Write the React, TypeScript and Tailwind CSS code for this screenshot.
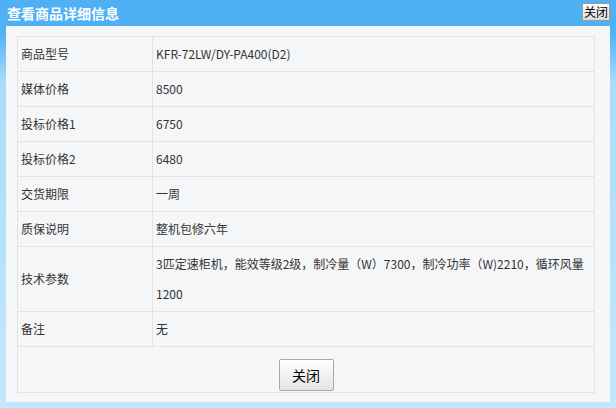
import React from 'react';

const rows: { label: string; value: string }[] = [
  { label: '商品型号', value: 'KFR-72LW/DY-PA400(D2)' },
  { label: '媒体价格', value: '8500' },
  { label: '投标价格1', value: '6750' },
  { label: '投标价格2', value: '6480' },
  { label: '交货期限', value: '一周' },
  { label: '质保说明', value: '整机包修六年' },
  { label: '技术参数', value: '3匹定速柜机，能效等级2级，制冷量（W）7300，制冷功率（W)2210，循环风量1200' },
  { label: '备注', value: '无' },
];

export default function App() {
  return (
    <div
      className="w-[616px] h-[408px] flex flex-col bg-[linear-gradient(180deg,#4fb1f4_0%,#4fb1f4_8%,#a9dcfa_20%,#c3e8fc_100%)] text-[#333]"
      style={{ fontFamily: '"Microsoft YaHei", "Noto Sans CJK SC", sans-serif' }}
    >
      {/* title bar */}
      <div className="h-[26px] flex items-center justify-between pl-[7px] pr-[6px] bg-[#4fb1f4]">
        <span className="text-white font-bold text-[14px] leading-none">查看商品详细信息</span>
        <button className="h-[18px] px-[1px] mt-[-3px] text-[12px] leading-none text-black border border-[#9a9a9a] bg-[linear-gradient(180deg,#fbfbfb,#dcdcdc)]">
          关闭
        </button>
      </div>

      {/* body */}
      <div className="flex-1 px-[6px] pb-[6px]">
        <div className="h-full bg-[#f5f6f8] pt-[10px] pl-[11px]">
          <table className="w-[578px] border-collapse text-[12px] table-fixed">
            <colgroup>
              <col className="w-[135px]" />
              <col />
            </colgroup>
            <tbody>
              {rows.map((r) => (
                <tr key={r.label}>
                  <td className="border border-[#e1e4e7] py-[2px] pl-[3px] leading-[30px] align-middle">{r.label}</td>
                  <td className="border border-[#e1e4e7] py-[2px] pl-[3px] pr-[3px] leading-[30px] align-middle">{r.value}</td>
                </tr>
              ))}
              <tr>
                <td colSpan={2} className="border border-[#e1e4e7] pt-[12px] pb-[1px] text-center">
                  <button className="w-[55px] h-[32px] text-[14px] text-black border border-[#a8a8a8] rounded-[2px] bg-[linear-gradient(180deg,#ffffff,#e4e4e4)]">
                    关闭
                  </button>
                </td>
              </tr>
            </tbody>
          </table>
        </div>
      </div>
    </div>
  );
}
